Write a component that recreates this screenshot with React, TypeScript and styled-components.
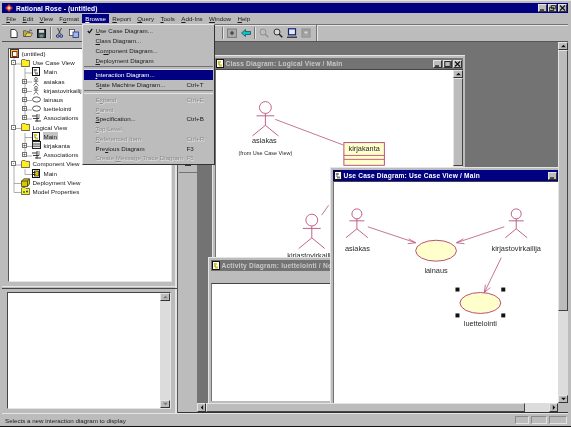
import React from "react";
import styled, { createGlobalStyle } from "styled-components";

const GRAY = "#bcbcbc";
const DARK = "#737373";
const LIGHT = "#e4e4e4";
const NAVY = "#000080";
const ROSE = "#b8507a";
const UML = "#ffffcc";

const GlobalStyle = createGlobalStyle`
  html, body { margin: 0; padding: 0; background: ${GRAY}; overflow: hidden; }
  * { box-sizing: border-box; }
`;

const Frame = styled.div`
  position: relative;
  width: 571px;
  height: 427px;
  padding: 3px 3px 0 2px;
  display: flex;
  flex-direction: column;
  background: ${GRAY};
  border-top: 1px solid ${LIGHT};
  border-bottom: 1px solid #111;
  font-family: "Liberation Sans", Arial, sans-serif;
  font-size: 6.2px;
  color: #1a1a1a;
  overflow: hidden;
  filter: blur(0.4px);
`;

const TitleBar = styled.div`
  height: 10px;
  margin-top: -1px;
  flex: none;
  display: flex;
  align-items: center;
  gap: 3px;
  padding: 0 1px 0 3px;
  background: ${NAVY};
  color: #fff;
  font-weight: 700;
  font-size: 6.6px;
  letter-spacing: 0.02em;
`;

const TitleText = styled.span`
  flex: 1;
  white-space: nowrap;
`;

const WinButtons = styled.div`
  display: flex;
  gap: 1px;
`;

const WinButton = styled.div`
  width: 9px;
  height: 8px;
  background: ${GRAY};
  border: 1px solid;
  border-color: ${LIGHT} #333 #333 ${LIGHT};
  display: flex;
  align-items: center;
  justify-content: center;
`;

const MenuBar = styled.div`
  height: 11px;
  flex: none;
  display: flex;
  align-items: center;
  padding-left: 1px;
`;

const MenuItem = styled.span<{ $active?: boolean }>`
  padding: 1px 3.2px;
  background: ${(p) => (p.$active ? NAVY : "transparent")};
  color: ${(p) => (p.$active ? "#fff" : "inherit")};
  white-space: nowrap;
`;

const Toolbar = styled.div`
  height: 18px;
  flex: none;
  display: flex;
  align-items: center;
  padding-left: 4.5px;
  border-top: 1px solid ${DARK};
  box-shadow: inset 0 1px 0 ${LIGHT};
  border-bottom: 1px solid #555;
`;

const ToolIcon = styled.div`
  width: 14px;
  height: 12px;
  flex: none;
  display: flex;
  align-items: center;
  justify-content: center;
`;

const ToolSep = styled.div`
  width: 1px;
  height: 12px;
  margin: 0 1.5px;
  flex: none;
  background: ${DARK};
  box-shadow: 1px 0 0 ${LIGHT};
`;

const ToolGap = styled.div<{ $w: number }>`
  width: ${(p) => p.$w}px;
  flex: none;
`;

const ToolEnd = styled.div`
  width: 1px;
  height: 16px;
  margin-left: 3px;
  background: ${DARK};
  box-shadow: 1px 0 0 ${LIGHT};
`;

const Workspace = styled.div`
  flex: 1;
  min-height: 0;
  display: flex;
`;

const LeftPane = styled.div`
  width: 176px;
  flex: none;
  display: flex;
  flex-direction: column;
  border-right: 1px solid #555;
  box-shadow: inset -2px 0 0 ${LIGHT};
`;

const TreeBox = styled.div`
  position: relative;
  height: 234px;
  margin: 6px 5px 0 5.5px;
  flex: none;
  background: #fff;
  border: 1px solid;
  border-color: #555 ${LIGHT} ${LIGHT} #555;
  overflow: hidden;
`;

const TreeLines = styled.svg`
  position: absolute;
  left: 0;
  top: 0;
`;

const TreeRow = styled.div<{ $level: number }>`
  position: relative;
  height: 9.2px;
  display: flex;
  align-items: center;
  padding-left: ${(p) => (p.$level === 0 ? 1 : 2.5 + (p.$level - 1) * 11)}px;
  white-space: nowrap;
`;

const ExpandSlot = styled.div`
  width: 5px;
  height: 5px;
  flex: none;
  margin-right: 4.5px;
  display: flex;
`;

const ExpandBox = styled.div`
  width: 5px;
  height: 5px;
  background: #fff;
  border: 0.7px solid ${DARK};
  display: flex;
  align-items: center;
  justify-content: center;
  color: #111;
  font-size: 5px;
  line-height: 1;
`;

const TreeIconBox = styled.div`
  width: 9px;
  height: 9px;
  flex: none;
  margin-right: 3px;
  display: flex;
  align-items: center;
  justify-content: center;
`;

const TreeLabel = styled.span<{ $selected?: boolean }>`
  padding: 0.5px 1px;
  margin-left: -1px;
  background: ${(p) => (p.$selected ? "#c4c4c4" : "transparent")};
`;

const PaneDivider = styled.div`
  height: 3px;
  margin-top: 4px;
  flex: none;
  border-top: 1px solid ${LIGHT};
  border-bottom: 1px solid #444;
`;

const DocBox = styled.div`
  height: 117px;
  margin: 3px 6px 0 5px;
  flex: none;
  display: flex;
  background: #fff;
  border: 1px solid;
  border-color: #444 ${LIGHT} ${LIGHT} #444;
`;

const DocText = styled.div`
  flex: 1;
`;

const DesktopGrid = styled.div`
  flex: 1;
  min-width: 0;
  display: grid;
  grid-template-columns: 19px 361px 10px;
  grid-template-rows: 361px 9px;
  border-bottom: 1px solid #333;
`;

const ToolStrip = styled.div`
  grid-row: 1 / 3;
  position: relative;
  padding: 122px 0 0 0;
`;

const ToolStripButton = styled.div`
  height: 9px;
  margin: 0 0.5px;
  border-bottom: 1px solid ${DARK};
  display: flex;
  justify-content: center;
  align-items: center;
`;

const ToolStripDash = styled.div`
  width: 6px;
  height: 1px;
  margin-top: -5px;
  background: #333;
`;

const Mdi = styled.div`
  position: relative;
  background: ${DARK};
  overflow: hidden;
`;

const ScrollBar = styled.div<{ $horizontal?: boolean; $width?: number }>`
  display: flex;
  flex-direction: ${(p) => (p.$horizontal ? "row" : "column")};
  ${(p) => (p.$width ? `width: ${p.$width}px; flex: none;` : "")}
  background: #dcdcdc;
`;

const ScrollArrow = styled.div<{ $horizontal?: boolean }>`
  width: ${(p) => (p.$horizontal ? "9px" : "100%")};
  height: ${(p) => (p.$horizontal ? "100%" : "8px")};
  flex: none;
  background: ${GRAY};
  border: 1px solid;
  border-color: ${LIGHT} #333 #333 ${LIGHT};
  display: flex;
  align-items: center;
  justify-content: center;
`;

const ScrollThumb = styled.div<{ $size: number; $horizontal?: boolean }>`
  flex: none;
  ${(p) => (p.$horizontal ? `width: ${p.$size}px;` : `height: ${p.$size}px;`)}
  background: ${GRAY};
  border: 1px solid;
  border-color: ${LIGHT} #444 #444 ${LIGHT};
`;

const ScrollTrack = styled.div`
  flex: 1;
`;

const Corner = styled.div`
  background: ${GRAY};
`;

const MdiWindow = styled.div<{ $x: number; $y: number; $w: number; $h: number }>`
  position: absolute;
  left: ${(p) => p.$x}px;
  top: ${(p) => p.$y}px;
  width: ${(p) => p.$w}px;
  height: ${(p) => p.$h}px;
  display: flex;
  flex-direction: column;
  padding: 2px;
  background: ${GRAY};
  border-top: 1px solid ${LIGHT};
  border-left: 1px solid ${LIGHT};
`;

const WindowTitle = styled.div<{ $active?: boolean }>`
  height: 11px;
  flex: none;
  display: flex;
  align-items: center;
  gap: 1.5px;
  padding: 0 1px 0 1px;
  background: ${(p) => (p.$active ? NAVY : DARK)};
  color: ${(p) => (p.$active ? "#fff" : "#c8c8c8")};
  font-weight: 700;
  font-size: 6.6px;
  letter-spacing: 0.03em;
`;

const WindowToolRow = styled.div`
  height: 12px;
  flex: none;
`;

const WindowBody = styled.div`
  flex: 1;
  min-height: 0;
  display: flex;
  background: #fff;
  border-top: 1px solid #444;
  border-left: 1px solid ${DARK};
`;

const Canvas = styled.svg`
  flex: 1;
  min-width: 0;
  display: block;
`;

const DiagramText = styled.text<{ $size?: number }>`
  font-family: "Liberation Sans", Arial, sans-serif;
  font-size: ${(p) => p.$size ?? 7.4}px;
  fill: #2a2a2a;
  text-anchor: middle;
  dominant-baseline: middle;
`;

const StatusBar = styled.div`
  height: 13px;
  flex: none;
  display: flex;
  align-items: center;
  padding: 0 1px 0 3px;
  border-top: 1px solid ${LIGHT};
`;

const StatusText = styled.span`
  flex: 1;
`;

const StatusCell = styled.div<{ $w: number }>`
  width: ${(p) => p.$w}px;
  height: 8px;
  margin-left: 2px;
  border: 1px solid;
  border-color: #8a8a8a ${LIGHT} ${LIGHT} #8a8a8a;
`;

const Dropdown = styled.div`
  position: absolute;
  left: 82px;
  top: 23px;
  width: 133px;
  display: flex;
  flex-direction: column;
  padding: 1px;
  background: ${GRAY};
  border: 1px solid;
  border-color: ${LIGHT} #333 #333 ${LIGHT};
  z-index: 5;
`;

const DropRow = styled.div<{ $active?: boolean; $disabled?: boolean }>`
  height: 9.75px;
  flex: none;
  display: flex;
  align-items: center;
  padding-left: 11.5px;
  position: relative;
  white-space: nowrap;
  background: ${(p) => (p.$active ? NAVY : "transparent")};
  color: ${(p) => (p.$active ? "#fff" : p.$disabled ? "#8c8c8c" : "inherit")};
  text-shadow: ${(p) => (p.$disabled ? "0.5px 0.5px 0 #e8e8e8" : "none")};
`;

const DropLabel = styled.span`
  width: 91px;
  flex: none;
`;

const CheckMark = styled.svg`
  position: absolute;
  left: 3px;
  top: 2px;
`;

const DropSep = styled.div`
  height: 5px;
  flex: none;
  display: flex;
  align-items: center;

  &::after {
    content: "";
    display: block;
    width: 100%;
    height: 2px;
    border-top: 1px solid ${DARK};
    border-bottom: 1px solid ${LIGHT};
  }
`;

/* little drawings */

const Tri = ({ dir, color = "#111" }: { dir: "up" | "down" | "left" | "right"; color?: string }) => {
  const pts = {
    up: "0,4 6,4 3,1",
    down: "0,1 6,1 3,4",
    left: "4,0 4,6 1,3",
    right: "1,0 1,6 4,3",
  }[dir];
  const box = dir === "up" || dir === "down" ? "0 0 6 5" : "0 0 5 6";
  return (
    <svg width={dir === "up" || dir === "down" ? 5 : 4} height={dir === "up" || dir === "down" ? 4 : 5} viewBox={box}>
      <polygon points={pts} fill={color} />
    </svg>
  );
};

const Glyph = ({ kind }: { kind: "min" | "max" | "restore" | "close" }) => (
  <svg width="7" height="6" viewBox="0 0 7 6">
    {kind === "min" && <rect x="1" y="4.4" width="4" height="1.3" fill="#111" />}
    {kind === "max" && <rect x="0.8" y="0.6" width="5.4" height="4.8" fill="none" stroke="#111" strokeWidth="0.9" />}
    {kind === "restore" && (
      <path d="M2.4.5h4v3.2h-4zM.6 2.3h4v3.2h-4z" fill={GRAY} stroke="#111" strokeWidth="0.8" />
    )}
    {kind === "close" && <path d="M1 .5l5 5M6 .5l-5 5" stroke="#111" strokeWidth="1.1" />}
  </svg>
);

const RoseLogo = () => (
  <svg width="8" height="8" viewBox="0 0 8 8">
    <polygon points="4,0 8,4 4,8 0,4" fill="#c03030" />
    <polygon points="4,2 6,4 4,6 2,4" fill="#f0d0a0" />
  </svg>
);

const ToolGlyph = ({ kind }: { kind: string }) => {
  switch (kind) {
    case "new":
      return (
        <svg width="8" height="9" viewBox="0 0 9 10">
          <path d="M1 .5h4.5L8 3v6.5H1z" fill="#fff" stroke="#111" strokeWidth="0.9" />
        </svg>
      );
    case "open":
      return (
        <svg width="10" height="8" viewBox="0 0 11 9">
          <path d="M.5 2h3l1 1h3v5.5h-7z" fill="#c8b040" stroke="#333" strokeWidth="0.7" />
          <path d="M2 8.5L4 4.5h6.5l-2 4z" fill="#e8d860" stroke="#333" strokeWidth="0.7" />
          <path d="M7 1.5q1.5-1 3 .5" fill="none" stroke="#222" strokeWidth="0.8" />
        </svg>
      );
    case "save":
      return (
        <svg width="9" height="9" viewBox="0 0 9 9">
          <rect x="0.5" y="0.5" width="8" height="8" fill="#304040" stroke="#111" />
          <rect x="2" y="0.8" width="5" height="3" fill="#d8d8d8" />
          <rect x="2.5" y="5.5" width="4" height="3" fill="#709090" />
        </svg>
      );
    case "cut":
      return (
        <svg width="7" height="10" viewBox="0 0 7 10">
          <path d="M1.5 0l3 6M5.5 0l-3 6" stroke="#333" strokeWidth="0.9" />
          <circle cx="1.8" cy="8" r="1.4" fill="none" stroke="#203080" />
          <circle cx="5.2" cy="8" r="1.4" fill="none" stroke="#203080" />
        </svg>
      );
    case "copy":
      return (
        <svg width="10" height="9" viewBox="0 0 10 9">
          <rect x="0.5" y="0.5" width="5" height="6" fill="#fff" stroke="#333" strokeWidth="0.7" />
          <rect x="4" y="3" width="5.5" height="5.5" fill="#a0b8e8" stroke="#203080" strokeWidth="0.8" />
        </svg>
      );
    case "frame":
      return (
        <svg width="10" height="10" viewBox="0 0 10 10">
          <rect x="0.5" y="1" width="9" height="8.5" fill="#a8a8a8" stroke="#808080" />
          <path d="M5 3v4M3 5h4" stroke="#333" strokeWidth="1.2" />
        </svg>
      );
    case "arrow":
      return (
        <svg width="10" height="8" viewBox="0 0 10 8">
          <path d="M.5 4L4.5.5V2.5h5v3h-5v2z" fill="#00c8c8" stroke="#204040" strokeWidth="0.7" />
        </svg>
      );
    case "zoomOff":
    case "zoom":
      return (
        <svg width="10" height="10" viewBox="0 0 10 10">
          <circle cx="4" cy="4" r="3" fill={kind === "zoom" ? "#d8d8d8" : "none"} stroke={kind === "zoom" ? "#333" : "#909090"} />
          <path d="M6.2 6.2L9.3 9.3" stroke={kind === "zoom" ? "#222" : "#909090"} strokeWidth="1.5" />
        </svg>
      );
    case "fit":
      return (
        <svg width="10" height="10" viewBox="0 0 10 10">
          <rect x="1.5" y="0.8" width="7" height="6" fill="#e8e8e8" stroke="#102080" strokeWidth="1.2" />
          <path d="M0 9.2h10" stroke="#222" strokeWidth="1.2" />
        </svg>
      );
    default:
      return (
        <svg width="10" height="10" viewBox="0 0 10 10">
          <rect x="1" y="1" width="8" height="8" fill="#a8a8a8" stroke="#8a8a8a" />
          <rect x="3" y="3" width="4" height="3" fill="#d8d8d8" stroke="#808080" strokeWidth="0.6" />
        </svg>
      );
  }
};

const DiagramDoc = ({ accent = "#111" }: { accent?: string }) => (
  <svg width="8" height="9" viewBox="0 0 8 9">
    <rect x="0.5" y="0.5" width="7" height="8" fill="#fff" stroke="#111" />
    <rect x="1.8" y="2" width="3" height="2" fill={accent} />
    <rect x="3" y="5.5" width="3" height="2" fill={accent} />
    <path d="M3 4v2" stroke="#111" strokeWidth="0.6" />
  </svg>
);

const TreeIcon = ({ kind }: { kind: string }) => {
  switch (kind) {
    case "root":
      return (
        <svg width="9" height="9" viewBox="0 0 9 9">
          <rect x="0.5" y="0.5" width="8" height="8" fill="#e8d040" stroke="#333" />
          <rect x="2.5" y="2.5" width="4.5" height="5" fill="#fff" stroke="#a02020" />
        </svg>
      );
    case "folder":
      return (
        <svg width="9" height="8" viewBox="0 0 9 8">
          <path d="M.4 7.5V1.2L1.4.4h2.5l1 1h3.7v6.1z" fill="#ffee20" stroke="#333" strokeWidth="0.7" />
        </svg>
      );
    case "usecase":
      return <DiagramDoc accent="#808080" />;
    case "class":
      return <DiagramDoc accent="#d8c800" />;
    case "component":
      return (
        <svg width="8" height="9" viewBox="0 0 8 9">
          <rect x="0.5" y="0.5" width="7" height="8" fill="#fff" stroke="#111" />
          <rect x="2.5" y="2" width="4" height="5" fill="#d8c800" stroke="#222" strokeWidth="0.7" />
          <rect x="1" y="3" width="2.5" height="1" fill="#222" />
          <rect x="1" y="5" width="2.5" height="1" fill="#222" />
        </svg>
      );
    case "actor":
      return (
        <svg width="8" height="9" viewBox="0 0 8 9">
          <circle cx="4" cy="1.8" r="1.4" fill="none" stroke="#333" strokeWidth="0.7" />
          <path d="M4 3.2v2.6M1.6 4.2h4.8M4 5.8L1.6 8.6M4 5.8l2.4 2.8" stroke="#444" strokeWidth="0.7" fill="none" />
        </svg>
      );
    case "oval":
      return (
        <svg width="9" height="7" viewBox="0 0 9 7">
          <ellipse cx="4.5" cy="3.5" rx="4" ry="2.6" fill="#fff" stroke="#333" strokeWidth="0.8" />
        </svg>
      );
    case "assoc":
      return (
        <svg width="9" height="9" viewBox="0 0 9 9">
          <path d="M0 3h5M1 5.5h6M3 8h6M5 1v7.5" stroke="#222" strokeWidth="0.9" fill="none" />
          <path d="M7 1v4.5" stroke="#555" strokeWidth="0.8" />
        </svg>
      );
    case "classItem":
      return (
        <svg width="9" height="8" viewBox="0 0 9 8">
          <rect x="0.5" y="0.5" width="8" height="7" fill="#eee" stroke="#222" />
          <path d="M.5 3h8M.5 5.2h8" stroke="#222" strokeWidth="0.8" />
        </svg>
      );
    case "deploy":
      return (
        <svg width="9" height="9" viewBox="0 0 9 9">
          <path d="M.5 3L3 .8h5.5V6L6.5 8.5H.5z" fill="#d8c800" stroke="#222" strokeWidth="0.7" />
          <path d="M.5 3h6v5.5M6.5 3l2-2.2" stroke="#222" strokeWidth="0.7" fill="none" />
        </svg>
      );
    default:
      return (
        <svg width="9" height="8" viewBox="0 0 9 8">
          <path d="M.4 7.5V1.2L1.4.4h2.5l1 1h3.7v6.1z" fill="#ffee20" stroke="#333" strokeWidth="0.7" />
          <circle cx="3" cy="5" r="1" fill="#008060" />
          <circle cx="6" cy="4.5" r="1" fill="#204090" />
        </svg>
      );
  }
};

const Actor = ({ x, y, r = 5 }: { x: number; y: number; r?: number }) => {
  const s = r / 5;
  return (
    <g fill="none" stroke={ROSE} strokeWidth="0.9">
      <circle cx={x} cy={y} r={r} />
      <path
        d={`M${x} ${y + r}V${y + 15 * s}M${x - 7.5 * s} ${y + 7 * s}H${x + 7.5 * s}M${x} ${y + 15 * s}L${x - 11 * s} ${
          y + 24 * s
        }M${x} ${y + 15 * s}L${x + 11 * s} ${y + 24 * s}`}
      />
    </g>
  );
};

const Arrow = ({ d, head }: { d: string; head: string }) => (
  <g fill="none" stroke={ROSE} strokeWidth="0.8">
    <path d={d} />
    <path d={head} />
  </g>
);

/* data */

type Node = {
  level: number;
  icon: string;
  label: string;
  expand?: "+" | "-";
  selected?: boolean;
};

const treeNodes: Node[] = [
  { level: 0, icon: "root", label: "(untitled)" },
  { level: 1, icon: "folder", label: "Use Case View", expand: "-" },
  { level: 2, icon: "usecase", label: "Main" },
  { level: 2, icon: "actor", label: "asiakas", expand: "+" },
  { level: 2, icon: "actor", label: "kirjastovirkailija", expand: "+" },
  { level: 2, icon: "oval", label: "lainaus", expand: "+" },
  { level: 2, icon: "oval", label: "luettelointi", expand: "+" },
  { level: 2, icon: "assoc", label: "Associations", expand: "+" },
  { level: 1, icon: "folder", label: "Logical View", expand: "-" },
  { level: 2, icon: "class", label: "Main", selected: true },
  { level: 2, icon: "classItem", label: "kirjakanta", expand: "+" },
  { level: 2, icon: "assoc", label: "Associations", expand: "+" },
  { level: 1, icon: "folder", label: "Component View", expand: "-" },
  { level: 2, icon: "component", label: "Main" },
  { level: 1, icon: "deploy", label: "Deployment View" },
  { level: 1, icon: "model", label: "Model Properties" },
];

const Mn = styled.u``;

const menus: [string, string][] = [
  ["F", "ile"],
  ["E", "dit"],
  ["V", "iew"],
  ["F", "ormat"],
  ["B", "rowse"],
  ["R", "eport"],
  ["Q", "uery"],
  ["T", "ools"],
  ["A", "dd-Ins"],
  ["W", "indow"],
  ["H", "elp"],
];

type DropItem = {
  pre?: string;
  key?: string;
  post?: string;
  accel?: string;
  checked?: boolean;
  disabled?: boolean;
  active?: boolean;
  sep?: boolean;
};

const dropItems: DropItem[] = [
  { pre: "", key: "U", post: "se Case Diagram...", checked: true },
  { pre: "", key: "C", post: "lass Diagram..." },
  { pre: "Co", key: "m", post: "ponent Diagram..." },
  { pre: "", key: "D", post: "eployment Diagram" },
  { sep: true },
  { pre: "", key: "I", post: "nteraction Diagram...", active: true },
  { pre: "S", key: "t", post: "ate Machine Diagram...", accel: "Ctrl+T" },
  { sep: true },
  { pre: "E", key: "x", post: "pand", accel: "Ctrl+E", disabled: true },
  { pre: "", key: "P", post: "arent", disabled: true },
  { pre: "", key: "S", post: "pecification...", accel: "Ctrl+B" },
  { pre: "", key: "T", post: "op Level", disabled: true },
  { pre: "", key: "R", post: "eferenced Item", accel: "Ctrl+R", disabled: true },
  { pre: "Pre", key: "v", post: "ious Diagram", accel: "F3" },
  { pre: "Create ", key: "M", post: "essage Trace Diagram", accel: "F5", disabled: true },
];

export default function App(): JSX.Element {
  return (
    <Frame>
      <GlobalStyle />
      <TitleBar>
        <RoseLogo />
        <TitleText>Rational Rose - (untitled)</TitleText>
        <WinButtons>
          <WinButton><Glyph kind="min" /></WinButton>
          <WinButton><Glyph kind="restore" /></WinButton>
          <WinButton><Glyph kind="close" /></WinButton>
        </WinButtons>
      </TitleBar>

      <MenuBar>
        {menus.map(([k, rest], i) => (
          <MenuItem key={i} $active={k + rest === "Browse"}>
            {k === "F" && rest === "ormat" ? (
              <>F<Mn>o</Mn>rmat</>
            ) : (
              <><Mn>{k}</Mn>{rest}</>
            )}
          </MenuItem>
        ))}
      </MenuBar>

      <Toolbar>
        <ToolIcon><ToolGlyph kind="new" /></ToolIcon>
        <ToolIcon><ToolGlyph kind="open" /></ToolIcon>
        <ToolIcon><ToolGlyph kind="save" /></ToolIcon>
        <ToolSep />
        <ToolIcon><ToolGlyph kind="cut" /></ToolIcon>
        <ToolIcon><ToolGlyph kind="copy" /></ToolIcon>
        <ToolGap $w={140} />
        <ToolSep />
        <ToolIcon><ToolGlyph kind="frame" /></ToolIcon>
        <ToolIcon><ToolGlyph kind="arrow" /></ToolIcon>
        <ToolSep />
        <ToolIcon><ToolGlyph kind="zoomOff" /></ToolIcon>
        <ToolIcon><ToolGlyph kind="zoom" /></ToolIcon>
        <ToolIcon><ToolGlyph kind="fit" /></ToolIcon>
        <ToolIcon><ToolGlyph kind="page" /></ToolIcon>
        <ToolEnd />
      </Toolbar>

      <Workspace>
        <LeftPane>
          <TreeBox>
            <TreeLines width="163" height="234" viewBox="8 49 163 234">
              <path
                d="M13 58V192.5M13 64H20M13 128.5H20M13 165H20M13 183.5H20M13 192.5H20M24 68V119M24 73H31M24 82H31M24 91.5H31M24 100.5H31M24 110H31M24 119H31M24 133V156M24 137.5H31M24 146.5H31M24 156H31M24 169V174.5M24 174.5H31"
                fill="none"
                stroke="#999"
                strokeWidth="0.8"
              />
            </TreeLines>
            {treeNodes.map((n, i) => (
              <TreeRow key={i} $level={n.level}>
                {n.level > 0 && (
                  <ExpandSlot>{n.expand && <ExpandBox>{n.expand}</ExpandBox>}</ExpandSlot>
                )}
                <TreeIconBox><TreeIcon kind={n.icon} /></TreeIconBox>
                <TreeLabel $selected={n.selected}>{n.label}</TreeLabel>
              </TreeRow>
            ))}
          </TreeBox>
          <PaneDivider />
          <DocBox>
            <DocText />
            <ScrollBar $width={10}>
              <ScrollArrow><Tri dir="up" color="#777" /></ScrollArrow>
              <ScrollTrack />
              <ScrollArrow><Tri dir="down" color="#777" /></ScrollArrow>
            </ScrollBar>
          </DocBox>
        </LeftPane>

        <DesktopGrid>
          <ToolStrip>
            <ToolStripButton><ToolStripDash /></ToolStripButton>
          </ToolStrip>
          <Mdi>
            <MdiWindow $x={15} $y={13} $w={253} $h={240}>
              <WindowTitle>
                <DiagramDoc accent="#d8c800" />
                <TitleText>Class Diagram: Logical View / Main</TitleText>
                <WinButtons>
                  <WinButton><Glyph kind="min" /></WinButton>
                  <WinButton><Glyph kind="max" /></WinButton>
                  <WinButton><Glyph kind="close" /></WinButton>
                </WinButtons>
              </WindowTitle>
              <WindowBody>
                <Canvas viewBox="215 70 240 215" width="240" height="215" preserveAspectRatio="xMinYMin">
                  <Actor x={265} y={108} r={6} />
                  <path d="M275 120L344 146" stroke={ROSE} strokeWidth="0.8" fill="none" />
                  <DiagramText x={264} y={142}>asiakas</DiagramText>
                  <DiagramText x={265} y={155} $size={5.6}>(from Use Case View)</DiagramText>
                  <rect x="344.5" y="143.5" width="41" height="23" fill={UML} stroke={ROSE} />
                  <path d="M344.5 156.5H385.5M344.5 160.5H385.5" stroke={ROSE} strokeWidth="0.9" />
                  <DiagramText x={365} y={150.5}>kirjakanta</DiagramText>
                  <Actor x={312} y={222} r={6} />
                  <path d="M322 217L329 207" stroke={ROSE} strokeWidth="0.8" />
                  <DiagramText x={312} y={258}>kirjastovirkailija</DiagramText>
                </Canvas>
                <ScrollBar $width={10}>
                  <ScrollArrow><Tri dir="up" /></ScrollArrow>
                  <ScrollThumb $size={88} />
                  <ScrollTrack />
                </ScrollBar>
              </WindowBody>
            </MdiWindow>

            <MdiWindow $x={11} $y={215} $w={200} $h={146}>
              <WindowTitle>
                <DiagramDoc accent="#d8c800" />
                <TitleText>Activity Diagram: luettelointi / New</TitleText>
              </WindowTitle>
              <WindowToolRow />
              <WindowBody />
            </MdiWindow>

            <MdiWindow $x={133} $y={125} $w={240} $h={260}>
              <WindowTitle $active>
                <DiagramDoc accent="#808080" />
                <TitleText>Use Case Diagram: Use Case View / Main</TitleText>
                <WinButtons>
                  <WinButton><Glyph kind="min" /></WinButton>
                  <WinButton><Glyph kind="max" /></WinButton>
                </WinButtons>
              </WindowTitle>
              <WindowBody>
                <Canvas viewBox="333 181 235 240" width="235" height="240" preserveAspectRatio="xMinYMin">
                  <Actor x={356} y={213} />
                  <Actor x={516} y={213} />
                  <DiagramText x={356.5} y={248}>asiakas</DiagramText>
                  <DiagramText x={516} y={248}>kirjastovirkailija</DiagramText>
                  <ellipse cx="435.5" cy="250" rx="20.5" ry="10.5" fill={UML} stroke={ROSE} />
                  <DiagramText x={435.5} y={270.5}>lainaus</DiagramText>
                  <ellipse cx="480" cy="302.5" rx="20.5" ry="10.5" fill={UML} stroke={ROSE} />
                  <DiagramText x={480} y={323.5}>luettelointi</DiagramText>
                  <Arrow d="M367 226L415 242" head="M408 238L415 242L407 243" />
                  <Arrow d="M504 226L456 242" head="M463 238L456 242L464 243" />
                  <Arrow d="M501 257L484 292" head="M485 284L484 292L490 287" />
                  <g fill="#111">
                    <rect x="455" y="287" width="4" height="4" />
                    <rect x="501" y="287" width="4" height="4" />
                    <rect x="455" y="313" width="4" height="4" />
                    <rect x="501" y="313" width="4" height="4" />
                  </g>
                </Canvas>
              </WindowBody>
            </MdiWindow>
          </Mdi>
          <ScrollBar>
            <ScrollArrow><Tri dir="up" /></ScrollArrow>
            <ScrollThumb $size={261} />
            <ScrollTrack />
            <ScrollArrow><Tri dir="down" /></ScrollArrow>
          </ScrollBar>
          <ScrollBar $horizontal>
            <ScrollArrow $horizontal><Tri dir="left" /></ScrollArrow>
            <ScrollThumb $horizontal $size={319} />
            <ScrollTrack />
            <ScrollArrow $horizontal><Tri dir="right" /></ScrollArrow>
          </ScrollBar>
          <Corner />
        </DesktopGrid>
      </Workspace>

      <StatusBar>
        <StatusText>Selects a new interaction diagram to display</StatusText>
        <StatusCell $w={14} />
        <StatusCell $w={16} />
        <StatusCell $w={18} />
      </StatusBar>

      <Dropdown>
        {dropItems.map((item, i) =>
          item.sep ? (
            <DropSep key={i} />
          ) : (
            <DropRow key={i} $active={item.active} $disabled={item.disabled}>
              {item.checked && (
                <CheckMark width="6" height="6" viewBox="0 0 6 6">
                  <path d="M.8 3l1.6 1.8L5.2.8" fill="none" stroke="#111" strokeWidth="1.2" />
                </CheckMark>
              )}
              <DropLabel>
                {item.pre}
                <Mn>{item.key}</Mn>
                {item.post}
              </DropLabel>
              {item.accel}
            </DropRow>
          )
        )}
      </Dropdown>
    </Frame>
  );
}
